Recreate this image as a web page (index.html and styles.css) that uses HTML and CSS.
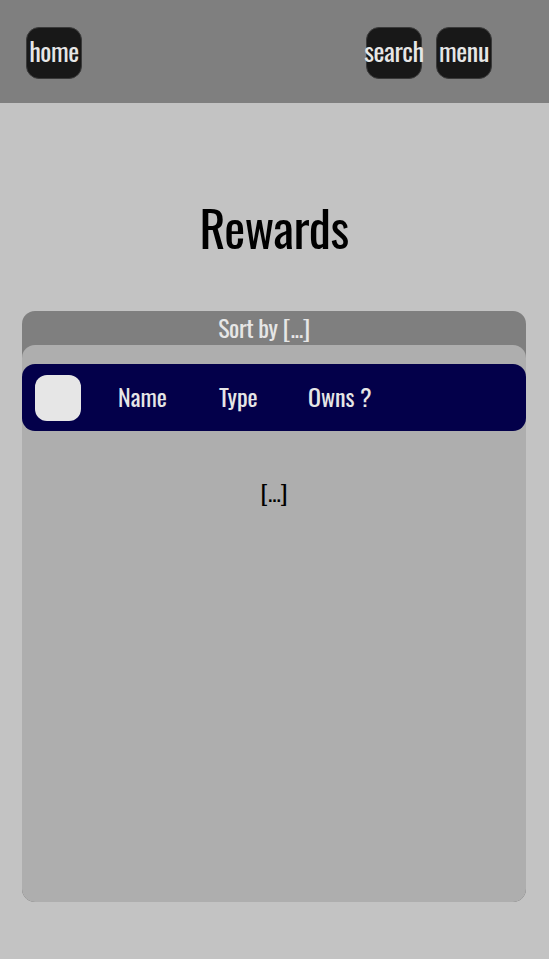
FILE: index.html
```html
<!DOCTYPE html>
<html>
<head>
<meta charset="utf-8">
<link rel="stylesheet" href="styles.css">
</head>
<body>
<header class="topbar">
  <button class="nav-btn">home</button>
  <div class="nav-right">
    <button class="nav-btn">search</button>
    <button class="nav-btn">menu</button>
  </div>
</header>
<main class="content">
  <h1 class="title">Rewards</h1>
  <section class="panel">
    <div class="sort-bar">Sort by [...]</div>
    <div class="list">
      <div class="list-head">
        <span class="check"></span>
        <span class="col col-name">Name</span>
        <span class="col col-type">Type</span>
        <span class="col col-owns">Owns ?</span>
      </div>
      <div class="placeholder">[...]</div>
    </div>
  </section>
</main>
</body>
</html>
```
FILE: styles.css
```css
* { box-sizing: border-box; }
html, body {
  margin: 0;
  padding: 0;
  background: #c3c3c3;
  font-family: "Oswald", "Liberation Sans Narrow", "DejaVu Sans Condensed", sans-serif;
}
.topbar {
  height: 103px;
  background: #7f7f7f;
  display: flex;
  align-items: flex-start;
  justify-content: space-between;
  padding: 27px 57px 0 26px;
}
.nav-right {
  display: flex;
  gap: 14px;
}
.nav-btn {
  width: 56px;
  height: 52px;
  border-radius: 13px;
  background: #181818;
  border: 1px solid #3a3a3a;
  color: #e6e6e6;
  font-family: inherit;
  font-size: 26px;
  line-height: 1;
  letter-spacing: -0.4px;
  padding: 0 0 4px 0;
  display: flex;
  align-items: center;
  justify-content: center;
  white-space: nowrap;
  overflow: visible;
}
.content {
  padding: 0 23px 0 22px;
}
.title {
  margin: 0;
  padding-top: 93px;
  height: 208px;
  text-align: center;
  font-weight: normal;
  font-size: 50px;
  line-height: 60px;
  color: #000;
  letter-spacing: -0.5px;
}
.panel {
  background: #7f7f7f;
  border-radius: 13px;
  overflow: hidden;
}
.sort-bar {
  height: 34px;
  padding-right: 20px;
  text-align: center;
  color: #e6e6e6;
  font-size: 24px;
  line-height: 32px;
  letter-spacing: -0.4px;
}
.list {
  background: #aeaeae;
  border-radius: 13px;
  height: 557px;
  padding-top: 19px;
}
.list-head {
  background: #03004a;
  border-radius: 13px;
  height: 67px;
  display: flex;
  align-items: center;
  padding-left: 13px;
  padding-bottom: 3px;
  color: #e6e6e6;
  font-size: 24px;
}
.check {
  width: 46px;
  height: 46px;
  border-radius: 12px;
  background: #e6e6e6;
  flex: none;
  margin-top: 3px;
}
.col-name { margin-left: 37px; width: 101px; }
.col-type { width: 89px; }
.placeholder {
  text-align: center;
  font-size: 22px;
  color: #000;
  margin-top: 46px;
  line-height: 30px;
}
```
